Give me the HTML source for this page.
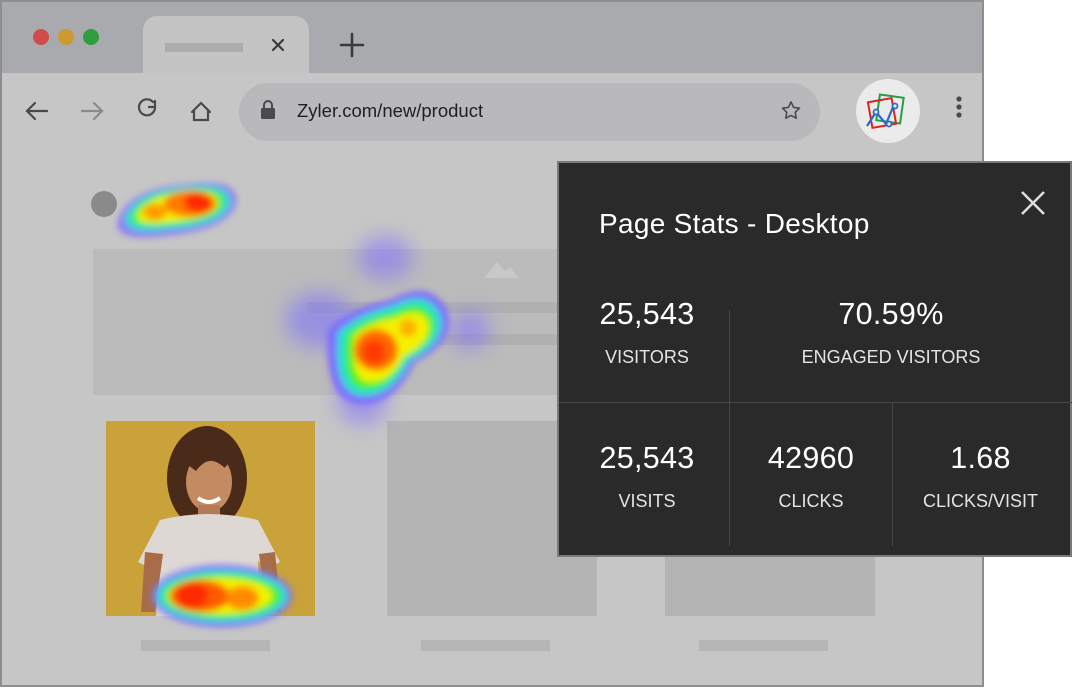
<!DOCTYPE html>
<html><head><meta charset="utf-8"><style>
*{margin:0;padding:0;box-sizing:border-box}
body{width:1072px;height:688px;background:#fff;position:relative;overflow:hidden;font-family:"Liberation Sans",sans-serif}
.a{position:absolute}
.panel{left:557px;top:161px;width:515px;height:396px;background:#2a2a2a;border:2px solid #7a7a7a;color:#fff}
.num{position:absolute;font-size:30.5px;text-align:center;color:#fff;letter-spacing:0.3px}
.lab{position:absolute;font-size:18px;text-align:center;color:#e4e4e4}
</style></head><body>
<div class="a" style="left:0;top:0;width:984px;height:687px;border:2px solid #8e8e8e;background:#c6c6c6"></div>
<div class="a" style="left:2px;top:2px;width:980px;height:71px;background:#a9aaad"></div>
<div class="a" style="left:143px;top:16px;width:166px;height:58px;background:#c4c4c4;border-radius:14px 14px 0 0"></div>
<div class="a" style="left:165px;top:43px;width:78px;height:9px;background:#acacac"></div>
<div class="a" style="left:33px;top:29px;width:16px;height:16px;border-radius:50%;background:#d14b4b"></div>
<div class="a" style="left:58px;top:29px;width:16px;height:16px;border-radius:50%;background:#cc9a2e"></div>
<div class="a" style="left:83px;top:29px;width:16px;height:16px;border-radius:50%;background:#2e9e3e"></div>
<svg class="a" style="left:0;top:0" width="984" height="160">
<g stroke="#3a3a3c" stroke-width="2.2" fill="none" stroke-linecap="round">
<path d="M273 40l10 10M283 40l-10 10"/>
<path d="M352 34v22M341 45h22" stroke-width="2.6"/>
<path d="M47 111H27M35 103l-8 8 8 8" stroke="#4a4a4c"/>
<path d="M102 111H82M94 103l8 8-8 8" stroke="#8a8a8c"/>
<path d="M155 107a8 8 0 1 1-2-5" stroke="#4a4a4c"/><path d="M155 101v6h-6" stroke="#4a4a4c"/>
<path d="M192 112l9-9 9 9M194 110v10h14v-10" stroke="#4a4a4c"/>
</g>
<rect x="239" y="83" width="581" height="58" rx="29" fill="#b9b9bb"/>
<rect x="261" y="108" width="14" height="11" rx="1.5" fill="#4a4a4c"/>
<path d="M264 108v-3a4 4 0 0 1 8 0v3" stroke="#4a4a4c" stroke-width="2" fill="none"/>
<path d="M791 102l2.6 5.4 5.9.8-4.3 4.1 1 5.9-5.2-2.8-5.2 2.8 1-5.9-4.3-4.1 5.9-.8z" stroke="#4a4a4c" stroke-width="1.6" fill="none" stroke-linejoin="round"/>
<text x="297" y="117" font-size="18.5" fill="#202020" font-family="Liberation Sans, sans-serif">Zyler.com/new/product</text>
<circle cx="888" cy="111" r="32" fill="#ebebeb"/>
<rect x="878" y="96" width="24" height="26" fill="none" stroke="#22a040" stroke-width="2" transform="rotate(8 890 109)"/>
<rect x="870" y="100" width="24" height="26" fill="none" stroke="#e02020" stroke-width="2" transform="rotate(-10 882 113)"/>
<path d="M867 126l9-14 10 12 7-17" stroke="#2a6bc8" stroke-width="2.2" fill="none"/>
<circle cx="876" cy="112" r="2.5" fill="#ebebeb" stroke="#2a6bc8" stroke-width="1.8"/>
<circle cx="889" cy="124" r="2.5" fill="#ebebeb" stroke="#2a6bc8" stroke-width="1.8"/>
<circle cx="895" cy="106" r="2.5" fill="#ebebeb" stroke="#2a6bc8" stroke-width="1.8"/>
<circle cx="959" cy="99" r="2.6" fill="#4a4a4c"/><circle cx="959" cy="107" r="2.6" fill="#4a4a4c"/><circle cx="959" cy="115" r="2.6" fill="#4a4a4c"/>
</svg>
<svg class="a" style="left:0;top:0" width="984" height="687">
<defs><filter id="b" x="-50%" y="-50%" width="200%" height="200%"><feGaussianBlur stdDeviation="3.5"/></filter>
<filter id="b2" x="-50%" y="-50%" width="200%" height="200%"><feGaussianBlur stdDeviation="10"/></filter></defs>
<circle cx="104" cy="204" r="13" fill="#8a8a8a"/>
<rect x="93" y="249" width="470" height="146" fill="#bbbbbb"/>
<rect x="307" y="302" width="256" height="11" fill="#b0b0b0"/>
<rect x="440" y="334" width="123" height="11" fill="#b0b0b0"/>
<path d="M484 278l13-16 8 9 5-4 9 11z" fill="#c8c8c8"/>
<rect x="387" y="421" width="210" height="195" fill="#b4b4b4"/>
<rect x="665" y="421" width="210" height="195" fill="#b4b4b4"/>
<rect x="141" y="640" width="129" height="11" fill="#b5b5b5"/>
<rect x="421" y="640" width="129" height="11" fill="#b5b5b5"/>
<rect x="699" y="640" width="129" height="11" fill="#b5b5b5"/>
<rect x="106" y="421" width="209" height="195" fill="#c9a23a"/>
<ellipse cx="207" cy="478" rx="40" ry="52" fill="#4a2a18"/>
<ellipse cx="209" cy="482" rx="23" ry="30" fill="#c48a62"/>
<path d="M192 468q16-22 36 -4" stroke="#4a2a18" stroke-width="10" fill="none"/>
<path d="M198 498q11 8 22 0" stroke="#fff" stroke-width="4" fill="none"/>
<rect x="198" y="505" width="22" height="20" fill="#b57a55"/>
<path d="M160 520q48-12 98 0l22 42-16 8-6-10 2 56h-104l4-56-6 10-16-8z" fill="#ddd8d4"/>
<path d="M145 552l-4 60h14l8-58z" fill="#a86d48"/>
<path d="M275 552l6 60h-14l-8-58z" fill="#a86d48"/>
<g filter="url(#b)">
<path d="M118 220q10-32 72-36q50-6 46 20q-8 26-72 32q-52 6-46-16z" fill="#7b6bff" opacity=".8"/>
<path d="M126 217q10-26 64-30q40-4 40 16q-6 22-62 26q-46 6-42-12z" fill="#18e0d0"/>
<path d="M132 215q10-22 58-26q34-2 34 14q-4 18-56 22q-40 4-36-10z" fill="#4ef020"/>
<path d="M138 214q10-18 52-22q28-2 28 12q-4 14-50 18q-34 4-30-8z" fill="#f5f200"/>
<ellipse cx="190" cy="204" rx="26" ry="13" fill="#ff7a00"/>
<ellipse cx="155" cy="212" rx="12" ry="8" fill="#ff9a00"/>
<ellipse cx="198" cy="202" rx="14" ry="10" fill="#ff2a00"/>
</g>
<g filter="url(#b2)" opacity=".55"><ellipse cx="385" cy="258" rx="28" ry="22" fill="#8070ff"/><ellipse cx="320" cy="320" rx="35" ry="28" fill="#7a70ff"/><ellipse cx="470" cy="330" rx="20" ry="20" fill="#8070ff"/><ellipse cx="362" cy="400" rx="25" ry="25" fill="#8070ff"/></g>
<g filter="url(#b)">
<path d="M328 330q20-22 62-30q40-22 57 10q10 32-32 52q-20 42-52 42q-40 0-35-74z" fill="#7b6bff"/>
<path d="M338 332q20-18 54-26q34-18 48 8q8 28-30 46q-18 36-46 36q-32 0-26-64z" fill="#18e0d0"/>
<path d="M346 334q18-16 48-22q28-16 40 6q6 24-28 40q-16 32-40 32q-26 0-20-56z" fill="#4ef020"/>
<path d="M354 336q16-14 42-18q24-12 32 4q4 20-24 34q-14 26-34 26q-20 0-16-46z" fill="#f5f200"/>
<ellipse cx="376" cy="350" rx="22" ry="21" fill="#ff6a00"/>
<ellipse cx="374" cy="352" rx="12" ry="12" fill="#ff3a00"/>
<ellipse cx="408" cy="328" rx="9" ry="9" fill="#ffb000"/>
</g>
<g filter="url(#b)">
<ellipse cx="222" cy="596" rx="70" ry="31" fill="#7b6bff"/>
<ellipse cx="222" cy="596" rx="65" ry="26" fill="#18e0d0"/>
<ellipse cx="222" cy="596" rx="59" ry="22" fill="#4ef020"/>
<ellipse cx="220" cy="596" rx="52" ry="18" fill="#f5f200"/>
<ellipse cx="200" cy="596" rx="30" ry="16" fill="#ff5a00"/>
<ellipse cx="242" cy="598" rx="17" ry="12" fill="#ff8a00"/>
<ellipse cx="192" cy="595" rx="16" ry="13" fill="#ff2a00"/>
</g>
</svg>
<div class="a panel">
<div class="a" style="left:40px;top:45px;font-size:28px;color:#fff;letter-spacing:0.3px">Page Stats - Desktop</div>
<svg class="a" style="left:461px;top:27px" width="26" height="26"><path d="M2 2l22 22M24 2L2 24" stroke="#ddd" stroke-width="2.6"/></svg>
<div class="a" style="left:0;top:239px;width:513px;height:1px;background:#474747"></div>
<div class="a" style="left:170px;top:147px;width:1px;height:236px;background:#474747"></div>
<div class="a" style="left:333px;top:240px;width:1px;height:143px;background:#474747"></div>
<div class="num" style="left:0;top:134px;width:176px">25,543</div>
<div class="lab" style="left:0;top:184px;width:176px">VISITORS</div>
<div class="num" style="left:171px;top:134px;width:322px">70.59%</div>
<div class="lab" style="left:171px;top:184px;width:322px">ENGAGED VISITORS</div>
<div class="num" style="left:0;top:278px;width:176px">25,543</div>
<div class="lab" style="left:0;top:328px;width:176px">VISITS</div>
<div class="num" style="left:171px;top:278px;width:162px">42960</div>
<div class="lab" style="left:171px;top:328px;width:162px">CLICKS</div>
<div class="num" style="left:334px;top:278px;width:175px">1.68</div>
<div class="lab" style="left:334px;top:328px;width:175px">CLICKS/VISIT</div>
</div>
</body></html>
